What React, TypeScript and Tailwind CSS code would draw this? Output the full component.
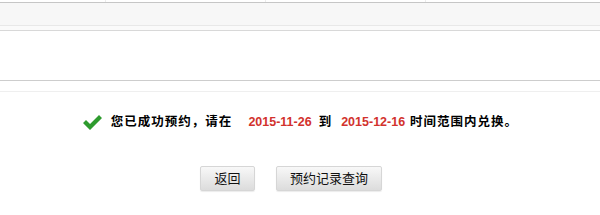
const App = () => {
    return (
        <div className="w-[600px] h-[215px] bg-white overflow-hidden font-['Liberation_Sans','Noto_Sans_CJK_SC',sans-serif]">
            {/* table header remnants */}
            <div className="h-[2px] flex">
                <div className="w-[105px]" />
                <div className="w-[1px] bg-[#ececec]" />
                <div className="w-[159px]" />
                <div className="w-[1px] bg-[#ececec]" />
                <div className="w-[159px]" />
                <div className="w-[1px] bg-[#ececec]" />
            </div>
            <div className="h-[23px] border-t border-[#c6c6c6] bg-[#f7f7f7]" />
            <div className="h-[5px] border-t border-[#e8e8e8] bg-[#fafafa]" />
            <div className="h-[50px] border-t border-[#d8d8d8] bg-white" />
            <div className="h-[11px] border-t border-[#cdcdcd] bg-white" />
            <div className="border-t border-[#efefef]" />

            <div className="mt-[21px] flex items-center justify-center h-[18px]">
                <svg width="21" height="17" viewBox="0 0 21 17" className="mr-[8px]">
                    <path d="M1 9 L4 6 L8 10 L17 1 L20 4 L8 16 Z" fill="#2e9b2e" />
                </svg>
                <span className="text-[12.5px] font-bold text-black tracking-[1px]">您已成功预约，请在</span>
                <span className="ml-[16px] mr-[7px] text-[12.5px] font-bold text-[#d2322d]">2015-11-26</span>
                <span className="text-[12.5px] font-bold text-black">到</span>
                <span className="ml-[10px] mr-[5px] text-[12.5px] font-bold text-[#d2322d]">2015-12-16</span>
                <span className="text-[12.5px] font-bold text-black tracking-[1px]">时间范围内兑换。</span>
            </div>

            <div className="mt-[35px] flex pl-[200px] gap-[21px]">
                <button className="w-[55px] h-[25px] rounded-[2px] border border-[#d6d6d6] bg-gradient-to-b from-[#f8f8f8] to-[#dcdcdc] text-[13px] text-[#111] shadow-[0_1px_1px_rgba(0,0,0,0.08)]">
                    返回
                </button>
                <button className="w-[106px] h-[25px] rounded-[2px] border border-[#d6d6d6] bg-gradient-to-b from-[#f8f8f8] to-[#dcdcdc] text-[13px] text-[#111] shadow-[0_1px_1px_rgba(0,0,0,0.08)]">
                    预约记录查询
                </button>
            </div>
        </div>
    );
};

export default App;
